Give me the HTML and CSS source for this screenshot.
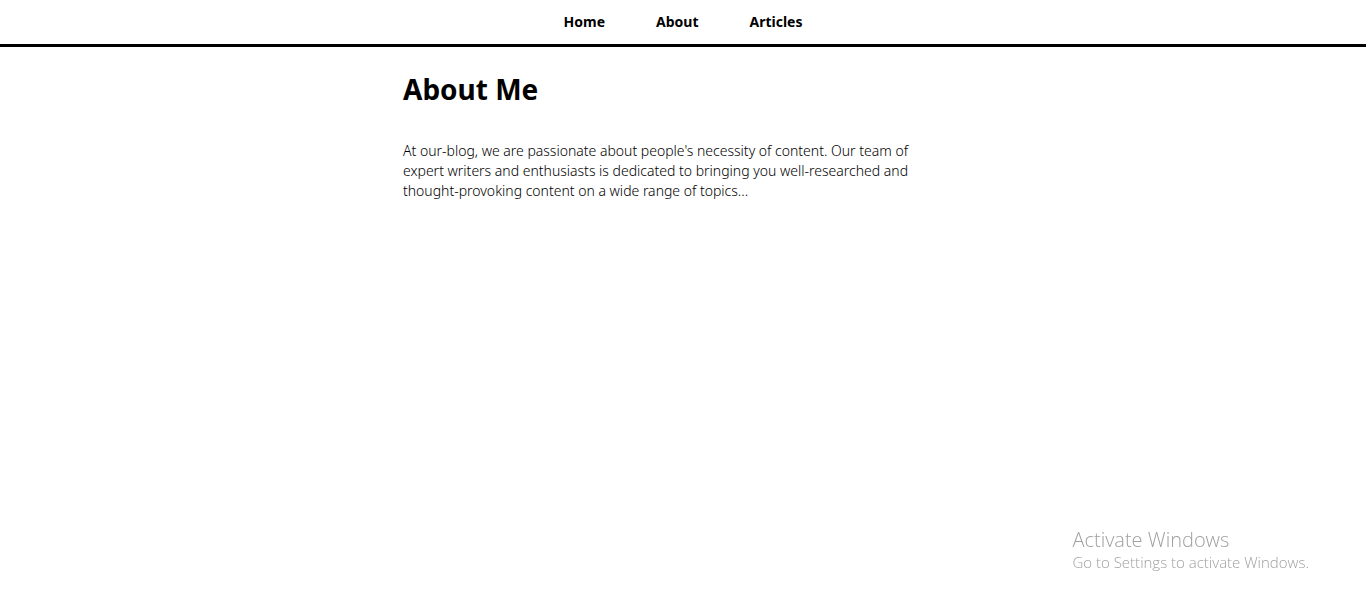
FILE: index.html
```html
<!DOCTYPE html>
<html lang="en">
<head>
<meta charset="utf-8">
<title>About Me</title>
<link rel="stylesheet" href="styles.css">
</head>
<body>
<header class="site-header">
  <nav class="nav">
    <a class="nav-link" href="#home">Home</a>
    <a class="nav-link" href="#about">About</a>
    <a class="nav-link" href="#articles">Articles</a>
  </nav>
</header>
<main class="content">
  <h1 class="title">About Me</h1>
  <p class="intro">At our-blog, we are passionate about people's necessity of content. Our team of expert writers and enthusiasts is dedicated to bringing you well-researched and thought-provoking content on a wide range of topics...</p>
</main>
<aside class="notice">
  <p class="notice-title">Activate Windows</p>
  <p class="notice-text">Go to Settings to activate Windows.</p>
</aside>
</body>
</html>
```

FILE: styles.css
```css
* {
  box-sizing: border-box;
}

body {
  margin: 0;
  background: #fff;
  color: #000;
  font-family: "Noto Sans", "Open Sans", sans-serif;
  font-size: 14px;
  line-height: 20px;
}

.site-header {
  padding: 12px;
  border-bottom: 3px solid #000;
}

.nav {
  display: flex;
  justify-content: center;
  gap: 51px;
}

.nav-link {
  color: inherit;
  font-weight: 700;
  text-decoration: none;
}

.content {
  max-width: 560px;
  margin: 0 auto;
  padding: 22px 0;
}

.title {
  margin: 0 0 32px;
  font-size: 28px;
  line-height: 40px;
}

.intro {
  max-width: 520px;
  margin: 0;
  font-weight: 300;
}

.notice {
  position: fixed;
  right: 57px;
  bottom: 31px;
  color: #a0a0a0;
  font-family: "Open Sans", "Noto Sans", sans-serif;
  font-weight: 300;
}

.notice-title {
  margin: 0;
  font-size: 20px;
  line-height: 24px;
}

.notice-text {
  margin: 0;
  font-size: 15px;
}
```
